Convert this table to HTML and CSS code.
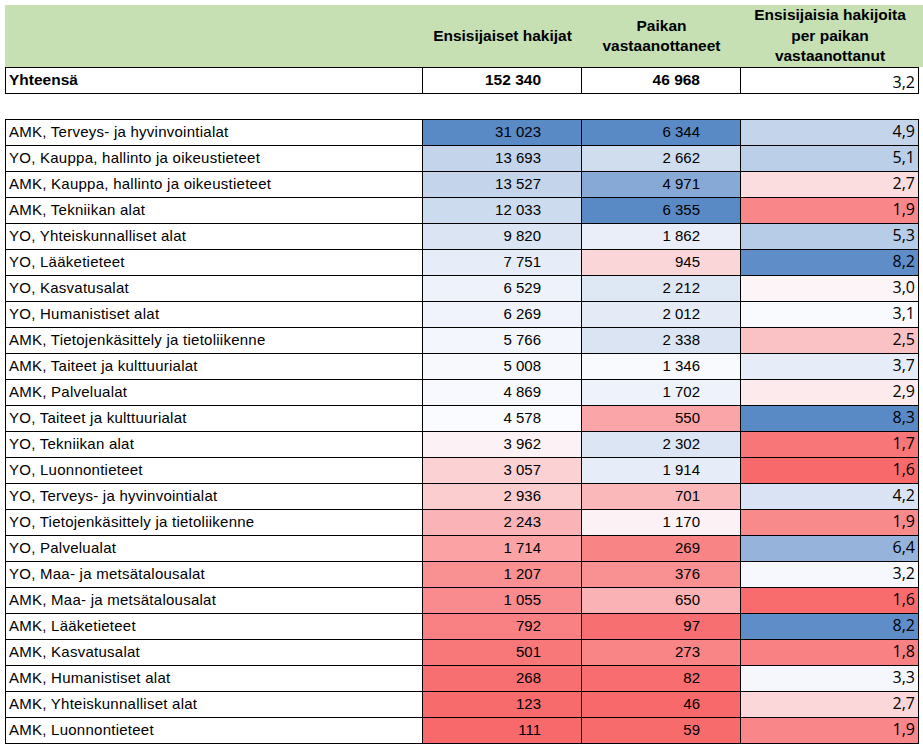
FILE: index.html
```html
<!DOCTYPE html>
<html lang="fi">
<head>
<meta charset="utf-8">
<title>Ensisijaiset hakijat</title>
<link rel="stylesheet" href="styles.css">
</head>
<body>
<div class="sheet">
  <div class="head">
    <div class="hc"></div>
    <div class="hc">Ensisijaiset hakijat</div>
    <div class="hc low">Paikan<br>vastaanottaneet</div>
    <div class="hc low">Ensisijaisia hakijoita<br>per paikan<br>vastaanottanut</div>
    <div></div>
  </div>

  <div class="grid tot">
    <div class="lab">Yhteensä</div>
    <div class="num">152&nbsp;340</div>
    <div class="num">46&nbsp;968</div>
    <div class="rat">3,2</div>
  </div>

  <div class="grid data">
    <div class="lab">AMK, Terveys- ja hyvinvointialat</div>
    <div class="num" style="background:rgb(90,138,198)">31&nbsp;023</div>
    <div class="num" style="background:rgb(90,138,198)">6&nbsp;344</div>
    <div class="rat" style="background:rgb(195,212,235)">4,9</div>

    <div class="lab">YO, Kauppa, hallinto ja oikeustieteet</div>
    <div class="num" style="background:rgb(195,212,235)">13&nbsp;693</div>
    <div class="num" style="background:rgb(207,221,239)">2&nbsp;662</div>
    <div class="rat" style="background:rgb(187,207,232)">5,1</div>

    <div class="lab">AMK, Kauppa, hallinto ja oikeustieteet</div>
    <div class="num" style="background:rgb(196,213,235)">13&nbsp;527</div>
    <div class="num" style="background:rgb(134,169,213)">4&nbsp;971</div>
    <div class="rat" style="background:rgb(251,220,223)">2,7</div>

    <div class="lab">AMK, Tekniikan alat</div>
    <div class="num" style="background:rgb(205,219,238)">12&nbsp;033</div>
    <div class="num" style="background:rgb(90,138,198)">6&nbsp;355</div>
    <div class="rat" style="background:rgb(249,135,138)">1,9</div>

    <div class="lab">YO, Yhteiskunnalliset alat</div>
    <div class="num" style="background:rgb(218,228,243)">9&nbsp;820</div>
    <div class="num" style="background:rgb(233,238,248)">1&nbsp;862</div>
    <div class="rat" style="background:rgb(183,204,231)">5,3</div>

    <div class="lab">YO, Lääketieteet</div>
    <div class="num" style="background:rgb(231,237,248)">7&nbsp;751</div>
    <div class="num" style="background:rgb(251,214,217)">945</div>
    <div class="rat" style="background:rgb(94,141,199)">8,2</div>

    <div class="lab">YO, Kasvatusalat</div>
    <div class="num" style="background:rgb(238,242,250)">6&nbsp;529</div>
    <div class="num" style="background:rgb(222,231,244)">2&nbsp;212</div>
    <div class="rat" style="background:rgb(252,244,247)">3,0</div>

    <div class="lab">YO, Humanistiset alat</div>
    <div class="num" style="background:rgb(240,243,251)">6&nbsp;269</div>
    <div class="num" style="background:rgb(228,235,247)">2&nbsp;012</div>
    <div class="rat" style="background:rgb(249,250,254)">3,1</div>

    <div class="lab">AMK, Tietojenkäsittely ja tietoliikenne</div>
    <div class="num" style="background:rgb(243,246,252)">5&nbsp;766</div>
    <div class="num" style="background:rgb(218,228,243)">2&nbsp;338</div>
    <div class="rat" style="background:rgb(250,194,197)">2,5</div>

    <div class="lab">AMK, Taiteet ja kulttuurialat</div>
    <div class="num" style="background:rgb(248,249,253)">5&nbsp;008</div>
    <div class="num" style="background:rgb(249,250,254)">1&nbsp;346</div>
    <div class="rat" style="background:rgb(231,237,248)">3,7</div>

    <div class="lab">AMK, Palvelualat</div>
    <div class="num" style="background:rgb(248,249,254)">4&nbsp;869</div>
    <div class="num" style="background:rgb(238,242,250)">1&nbsp;702</div>
    <div class="rat" style="background:rgb(252,234,237)">2,9</div>

    <div class="lab">YO, Taiteet ja kulttuurialat</div>
    <div class="num" style="background:rgb(250,251,254)">4&nbsp;578</div>
    <div class="num" style="background:rgb(250,166,169)">550</div>
    <div class="rat" style="background:rgb(90,138,198)">8,3</div>

    <div class="lab">YO, Tekniikan alat</div>
    <div class="num" style="background:rgb(252,241,244)">3&nbsp;962</div>
    <div class="num" style="background:rgb(219,229,243)">2&nbsp;302</div>
    <div class="rat" style="background:rgb(248,118,120)">1,7</div>

    <div class="lab">YO, Luonnontieteet</div>
    <div class="num" style="background:rgb(251,209,212)">3&nbsp;057</div>
    <div class="num" style="background:rgb(231,237,248)">1&nbsp;914</div>
    <div class="rat" style="background:rgb(248,105,107)">1,6</div>

    <div class="lab">YO, Terveys- ja hyvinvointialat</div>
    <div class="num" style="background:rgb(251,205,207)">2&nbsp;936</div>
    <div class="num" style="background:rgb(250,184,187)">701</div>
    <div class="rat" style="background:rgb(217,227,243)">4,2</div>

    <div class="lab">YO, Tietojenkäsittely ja tietoliikenne</div>
    <div class="num" style="background:rgb(250,180,183)">2&nbsp;243</div>
    <div class="num" style="background:rgb(252,241,244)">1&nbsp;170</div>
    <div class="rat" style="background:rgb(249,138,140)">1,9</div>

    <div class="lab">YO, Palvelualat</div>
    <div class="num" style="background:rgb(250,162,164)">1&nbsp;714</div>
    <div class="num" style="background:rgb(249,132,134)">269</div>
    <div class="rat" style="background:rgb(150,180,219)">6,4</div>

    <div class="lab">YO, Maa- ja metsätalousalat</div>
    <div class="num" style="background:rgb(249,144,146)">1&nbsp;207</div>
    <div class="num" style="background:rgb(249,145,147)">376</div>
    <div class="rat" style="background:rgb(247,248,253)">3,2</div>

    <div class="lab">AMK, Maa- ja metsätalousalat</div>
    <div class="num" style="background:rgb(249,138,141)">1&nbsp;055</div>
    <div class="num" style="background:rgb(250,178,181)">650</div>
    <div class="rat" style="background:rgb(248,108,110)">1,6</div>

    <div class="lab">AMK, Lääketieteet</div>
    <div class="num" style="background:rgb(249,129,131)">792</div>
    <div class="num" style="background:rgb(248,111,113)">97</div>
    <div class="rat" style="background:rgb(95,141,200)">8,2</div>

    <div class="lab">AMK, Kasvatusalat</div>
    <div class="num" style="background:rgb(248,119,121)">501</div>
    <div class="num" style="background:rgb(249,133,135)">273</div>
    <div class="rat" style="background:rgb(249,129,131)">1,8</div>

    <div class="lab">AMK, Humanistiset alat</div>
    <div class="num" style="background:rgb(248,111,113)">268</div>
    <div class="num" style="background:rgb(248,109,111)">82</div>
    <div class="rat" style="background:rgb(245,247,252)">3,3</div>

    <div class="lab">AMK, Yhteiskunnalliset alat</div>
    <div class="num" style="background:rgb(248,107,108)">123</div>
    <div class="num" style="background:rgb(248,105,107)">46</div>
    <div class="rat" style="background:rgb(251,215,218)">2,7</div>

    <div class="lab">AMK, Luonnontieteet</div>
    <div class="num" style="background:rgb(248,105,107)">111</div>
    <div class="num" style="background:rgb(248,107,109)">59</div>
    <div class="rat" style="background:rgb(249,134,136)">1,9</div>
  </div>
</div>
</body>
</html>
```

FILE: styles.css
```css
html, body {
  margin: 0;
  padding: 0;
  background: #ffffff;
}

body {
  font-family: "Liberation Sans", Arial, sans-serif;
  color: #000000;
}

.sheet {
  padding: 5px 0 0 5px;
}

.head {
  display: grid;
  grid-template-columns: 418px 159px 159px 178px 1fr;
  height: 62px;
  background: #c6e0b4;
  font-weight: bold;
  font-size: 15.5px;
  line-height: 20.5px;
}

.hc {
  display: flex;
  align-items: center;
  justify-content: center;
  text-align: center;
  box-sizing: border-box;
}

.hc.low {
  padding-top: 0;
}

.grid {
  display: grid;
  grid-template-columns: 417px 159px 159px 178px;
  width: max-content;
  border-left: 1px solid #000000;
  border-top: 1px solid #000000;
}

.grid > div {
  box-sizing: border-box;
  height: 26px;
  border-right: 1px solid #000000;
  border-bottom: 1px solid #000000;
  white-space: nowrap;
  overflow: hidden;
}

.data {
  margin-top: 25px;
}

.lab {
  padding: 0 3px;
  font-size: 15px;
  letter-spacing: 0.25px;
  line-height: 23px;
}

.num {
  text-align: right;
  padding-right: 40px;
  font-size: 15px;
  line-height: 23px;
}

.rat {
  text-align: right;
  padding-right: 3px;
  font-family: "Open Sans", "DejaVu Sans", sans-serif;
  font-size: 16px;
  line-height: 23px;
}

.tot .lab,
.tot .num {
  font-weight: bold;
  font-size: 15.5px;
  letter-spacing: 0;
}

.tot .rat {
  padding-top: 3px;
}
```
